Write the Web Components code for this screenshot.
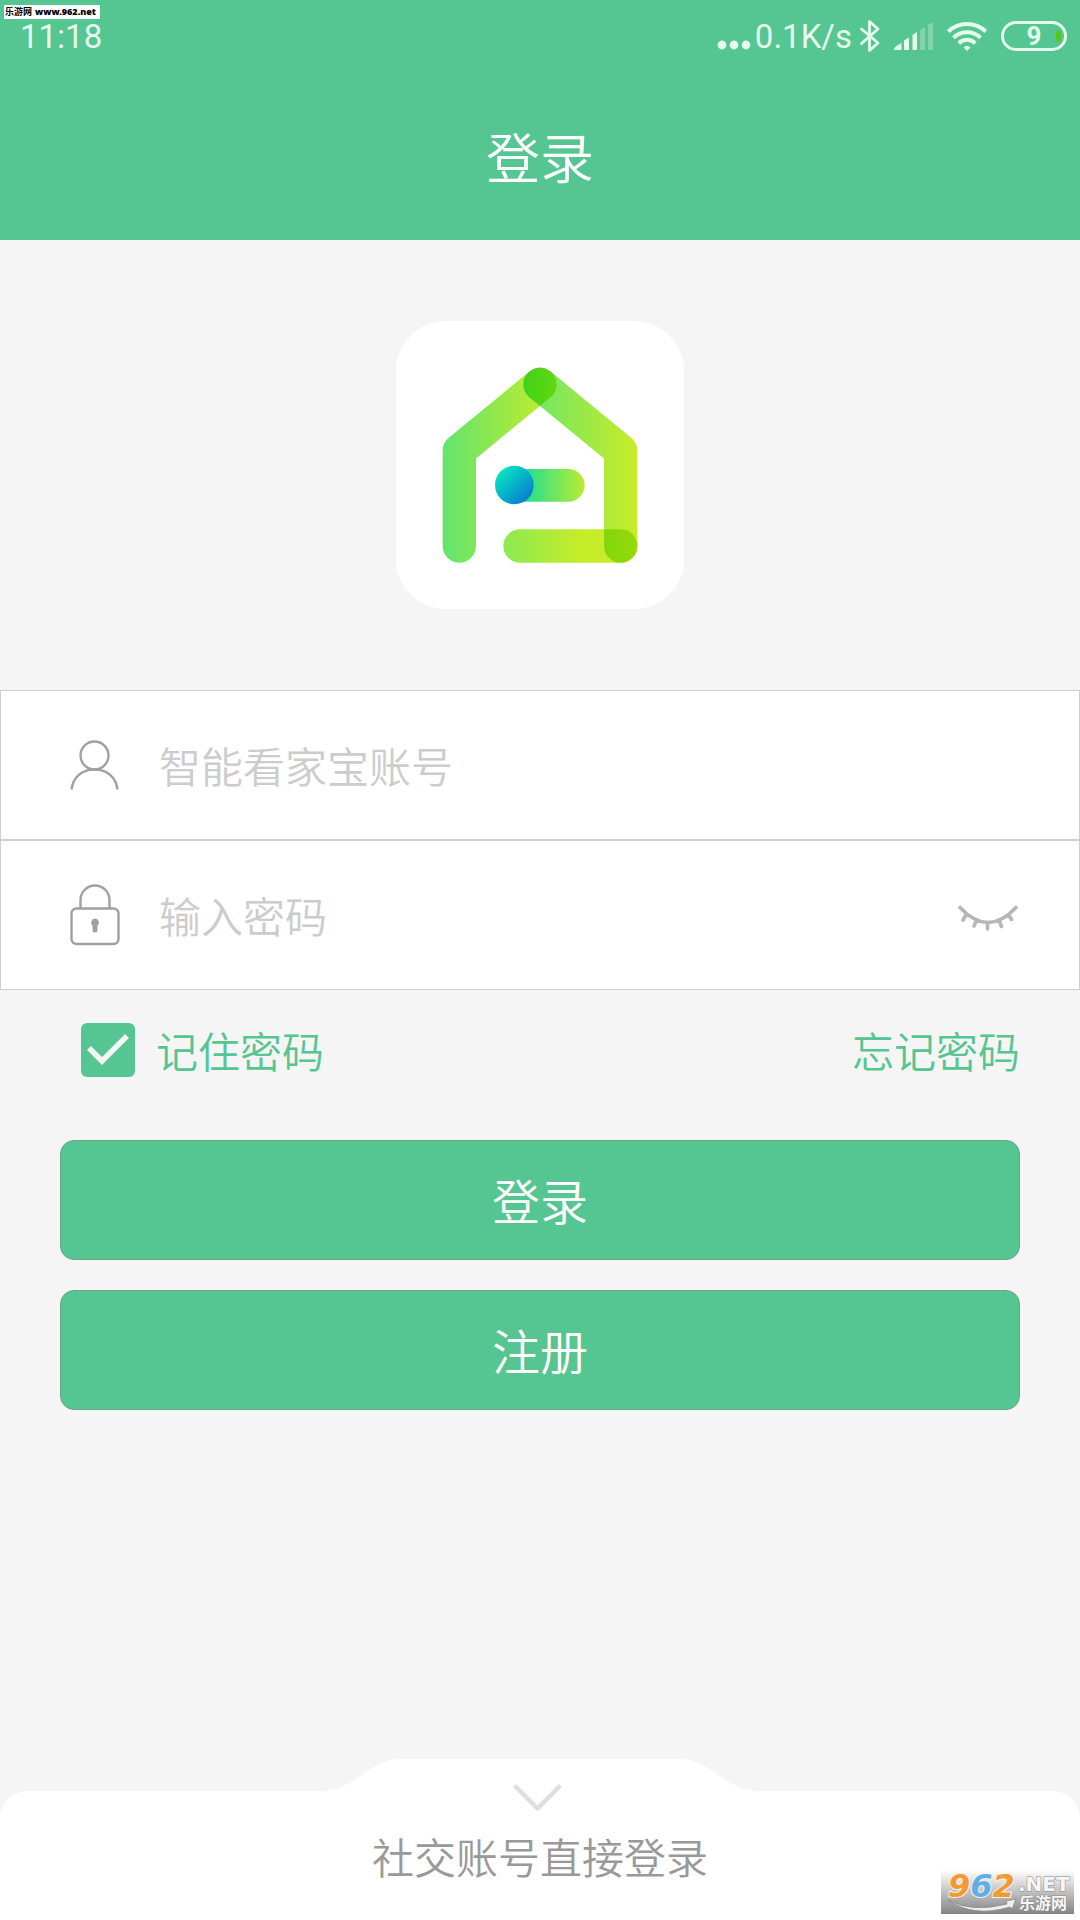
<!DOCTYPE html>
<html lang="zh-CN">
<head>
    <meta charset="UTF-8">
    <meta name="viewport" content="width=device-width, initial-scale=1.0">
    <title>登录</title>
    <style>
        body {
            --green: #55c591;
            --line: #cfcfcf;
            margin: 0;
            background: #f5f5f5;
            font-family: "Noto Sans CJK SC", sans-serif;
            font-weight: 350;
        }
    </style>
</head>
<body>
    <login-page></login-page>

    <script>
        class StatusBar extends HTMLElement {
            connectedCallback() {
                this.attachShadow({ mode: 'open' });
                this.shadowRoot.innerHTML = `
                    <style>
                        :host {
                            display: flex;
                            align-items: center;
                            justify-content: space-between;
                            height: 72px;
                            padding: 0 13px 0 20px;
                            box-sizing: border-box;
                            background: var(--green);
                            color: #e4fbee;
                            font-family: Roboto, sans-serif;
                            font-size: 33px;
                            font-weight: 400;
                        }

                        .icons {
                            display: flex;
                            align-items: center;
                            gap: 14px;
                        }

                        .net {
                            display: flex;
                            align-items: center;
                            gap: 4px;
                        }

                        .net + svg {
                            margin-left: -6px;
                        }

                        svg {
                            display: block;
                        }

                        time, .net {
                            line-height: 40px;
                            padding-top: 2px;
                        }
                    </style>
                    <time>11:18</time>
                    <div class="icons">
                        <div class="net">
                            <svg width="34" height="32" viewBox="0 0 34 32" fill="currentColor">
                                <circle cx="5" cy="24" r="4.4"/><circle cx="17" cy="24" r="4.4"/><circle cx="29" cy="24" r="4.4"/>
                            </svg>
                            <span>0.1K/s</span>
                        </div>
                        <svg width="20" height="32" viewBox="0 0 20 32" fill="none" stroke="currentColor" stroke-width="2.8" stroke-linejoin="round" stroke-linecap="round">
                            <path d="M1.500 9L18 23L9.500 30.500V1.500L18 9L1.500 23.500"/>
                        </svg>
                        <svg width="39" height="30" viewBox="0 0 39 30" fill="currentColor">
                            <path d="M0 28.500Q0 25.500 7.500 22V29H1Q0 29 0 28.500zM10 19.500L15 16.500V29H10zM18.500 14L23 11V29H18.500z"/>
                            <path opacity=".3" d="M26 9L31 6V29H26zM34 4L39 1V29H34z"/>
                        </svg>
                        <svg width="40" height="32" viewBox="0 0 40 32" fill="none" stroke="currentColor" stroke-width="4">
                            <path d="M1.200 11.500A27 27 0 0 1 38.800 11.500"/>
                            <path d="M6.500 17.700A19.500 19.500 0 0 1 33.500 17.700"/>
                            <path d="M11.700 23.200A12 12 0 0 1 28.300 23.200"/>
                            <path fill="currentColor" stroke="none" d="M20 31L16.500 27.500Q20 24 23.500 27.500z"/>
                        </svg>
                        <svg width="66" height="30" viewBox="0 0 66 30">
                            <rect x="1.500" y="1.500" width="63" height="27" rx="13.500" fill="none" stroke="currentColor" stroke-width="3"/>
                            <rect x="55" y="9.500" width="5" height="11" rx="2.500" fill="#55c41e"/>
                            <text x="33" y="24" text-anchor="middle" font-size="26" font-weight="700" fill="currentColor">9</text>
                        </svg>
                    </div>
                `;
            }
        }

        class TitleBar extends HTMLElement {
            connectedCallback() {
                this.attachShadow({ mode: 'open' });
                this.shadowRoot.innerHTML = `
                    <style>
                        :host {
                            display: flex;
                            align-items: center;
                            justify-content: center;
                            height: 168px;
                            background: var(--green);
                            color: white;
                        }

                        h1 {
                            margin: 0;
                            font-size: 54px;
                            font-weight: inherit;
                            line-height: 80px;
                        }
                    </style>
                    <h1><slot></slot></h1>
                `;
            }
        }

        class AppLogo extends HTMLElement {
            connectedCallback() {
                this.attachShadow({ mode: 'open' });
                this.shadowRoot.innerHTML = `
                    <style>
                        :host {
                            display: flex;
                            justify-content: center;
                            padding: 81px 0;
                        }

                        svg {
                            width: 288px;
                            height: 288px;
                            background: white;
                            border-radius: 50px;
                        }
                    </style>
                    <svg viewBox="0 0 864 864" fill="none" stroke-width="100" stroke-linecap="round" stroke-linejoin="round">
                        <defs>
                            <linearGradient id="left" gradientUnits="userSpaceOnUse" x1="140" y1="0" x2="440" y2="0">
                                <stop stop-color="#62e46f"/><stop offset="1" stop-color="#bdec2f"/>
                            </linearGradient>
                            <linearGradient id="right" gradientUnits="userSpaceOnUse" x1="430" y1="0" x2="724" y2="0">
                                <stop stop-color="#74e663"/><stop offset="1" stop-color="#c8ec28"/>
                            </linearGradient>
                            <linearGradient id="bottom" gradientUnits="userSpaceOnUse" x1="322" y1="0" x2="560" y2="0">
                                <stop stop-color="#8ce953"/><stop offset="1" stop-color="#c7ec28"/>
                            </linearGradient>
                            <linearGradient id="bar" gradientUnits="userSpaceOnUse" x1="400" y1="0" x2="566" y2="0">
                                <stop stop-color="#2de08a"/><stop offset="1" stop-color="#bbec31"/>
                            </linearGradient>
                            <linearGradient id="dot" x1=".15" y1=".15" x2=".85" y2=".85">
                                <stop stop-color="#05e3c0"/><stop offset="1" stop-color="#087fd0"/>
                            </linearGradient>
                            <linearGradient id="drop">
                                <stop stop-color="#43d01a"/><stop offset="1" stop-color="#5fd910"/>
                            </linearGradient>
                            <linearGradient id="corner">
                                <stop stop-color="#83d60c"/><stop offset="1" stop-color="#95da07"/>
                            </linearGradient>
                        </defs>
                        <path stroke="url(#left)" d="M190 675V389L432 190"/>
                        <path stroke="url(#right)" d="M432 190L674 389V675"/>
                        <path stroke="url(#bottom)" d="M372 675H674.01V675.01"/>
                        <path stroke="url(#bar)" stroke-width="98" d="M370 493H517V493.01"/>
                        <circle cx="355" cy="492" r="58" fill="url(#dot)"/>
                        <path fill="url(#drop)" d="M400 229A50 50 0 1 1 464 229L432 255z"/>
                        <path fill="url(#corner)" d="M624 625H674A50 50 0 1 1 624 675z"/>
                    </svg>
                `;
            }
        }

        class LoginField extends HTMLElement {
            connectedCallback() {
                const type = this.getAttribute('type') || 'text';
                const hint = this.getAttribute('hint');
                this.attachShadow({ mode: 'open' });
                this.shadowRoot.innerHTML = `
                    <style>
                        :host {
                            display: flex;
                            align-items: center;
                            height: 150px;
                            padding: 0 61px 0 69px;
                            box-sizing: border-box;
                            background: white;
                            border: 1px solid var(--line);
                        }

                        label {
                            display: flex;
                            margin-right: 39px;
                        }

                        input {
                            flex: 1;
                            min-width: 0;
                            height: 80px;
                            padding: 0 0 2px;
                            border: 0;
                            outline: 0;
                            background: none;
                            color: #666;
                            font: inherit;
                            font-size: 42px;
                            box-sizing: border-box;
                        }

                        input::placeholder {
                            color: #ccc;
                            opacity: 1;
                        }
                    </style>
                    <label for="field" aria-label="${hint}"><slot name="icon"></slot></label>
                    <input id="field" type="${type}" placeholder="${hint}">
                    <slot name="action"></slot>
                `;
            }
        }

        class LoginOptions extends HTMLElement {
            connectedCallback() {
                this.attachShadow({ mode: 'open' });
                this.shadowRoot.innerHTML = `
                    <style>
                        :host {
                            display: flex;
                            align-items: center;
                            justify-content: space-between;
                            height: 120px;
                            padding: 0 60px 0 81px;
                            color: var(--green);
                            font-size: 42px;
                            line-height: 60px;
                        }

                        label {
                            display: flex;
                            align-items: center;
                            gap: 21px;
                        }

                        .box {
                            display: grid;
                        }

                        input, svg {
                            grid-area: 1 / 1;
                            width: 54px;
                            height: 54px;
                            margin: 0;
                        }

                        input {
                            appearance: none;
                            border-radius: 6px;
                            background: white;
                        }

                        input:checked {
                            background: var(--green);
                        }

                        svg {
                            pointer-events: none;
                        }

                        a {
                            color: inherit;
                            text-decoration: none;
                        }
                    </style>
                    <label>
                        <span class="box">
                            <input type="checkbox" checked>
                            <svg viewBox="0 0 54 54" fill="none" stroke="#f5f5f5" stroke-width="5.500"><path d="M8 25L21 38L46 13"/></svg>
                        </span>
                        记住密码
                    </label>
                    <a href="#">忘记密码</a>
                `;
            }
        }

        class MainButton extends HTMLElement {
            connectedCallback() {
                this.attachShadow({ mode: 'open' });
                this.shadowRoot.innerHTML = `
                    <style>
                        :host {
                            display: block;
                        }

                        button {
                            width: 100%;
                            height: 120px;
                            padding: 0 0 2px;
                            border: 1px solid #6fa388;
                            border-radius: 14px;
                            background: var(--green);
                            color: white;
                            font: inherit;
                            font-size: 48px;
                            line-height: 72px;
                        }
                    </style>
                    <button type="button"><slot></slot></button>
                `;
            }
        }

        class SocialDrawer extends HTMLElement {
            connectedCallback() {
                this.attachShadow({ mode: 'open' });
                this.shadowRoot.innerHTML = `
                    <style>
                        :host {
                            display: grid;
                            grid-template-rows: 32px 129px;
                            justify-items: center;
                        }

                        .panel {
                            grid-area: 2 / 1;
                            justify-self: stretch;
                            display: flex;
                            align-items: center;
                            justify-content: center;
                            background: white;
                            border-radius: 28px 28px 0 0;
                            color: #999;
                            font-size: 42px;
                            line-height: 60px;
                        }

                        button {
                            grid-area: 1 / 1 / 3 / 2;
                            align-self: start;
                            padding: 0;
                            border: 0;
                            background: none;
                        }

                        svg {
                            display: block;
                        }
                    </style>
                    <div class="panel"><slot></slot></div>
                    <button type="button" aria-label="收起">
                        <svg width="436" height="56" viewBox="0 0 436 56">
                            <path fill="white" d="M0 32Q14 32 29 23L52 8Q65 0 78 0H358Q371 0 384 8L407 23Q422 32 436 32V33H0z"/>
                            <path fill="none" stroke="#dedede" stroke-width="4.500" stroke-linecap="round" stroke-linejoin="round" d="M194 28L215.500 49.500L237 28"/>
                        </svg>
                    </button>
                `;
            }
        }

        class SiteMark extends HTMLElement {
            connectedCallback() {
                this.attachShadow({ mode: 'open' });
                this.shadowRoot.innerHTML = `
                    <style>
                        :host {
                            position: absolute;
                            right: 6px;
                            bottom: 6px;
                        }

                        svg {
                            display: block;
                            overflow: visible;
                            background: linear-gradient(#fff, #848484);
                        }

                        text {
                            font-family: "DejaVu Sans", "Noto Sans CJK SC", sans-serif;
                            font-weight: 700;
                            paint-order: stroke;
                        }

                        .num {
                            font-size: 32px;
                            font-style: oblique;
                            stroke: #f2f2f2;
                            stroke-width: 2px;
                        }

                        .word {
                            fill: #f6f6f6;
                            stroke: #888;
                            stroke-width: 1px;
                        }
                    </style>
                    <svg width="133" height="44" viewBox="0 0 133 44">
                        <text class="num" x="7" y="27"><tspan fill="#f29a30">9</tspan><tspan fill="#62aee2">6</tspan><tspan fill="#f29a30">2</tspan></text>
                        <text class="word" x="77" y="21" font-size="20">.NET</text>
                        <path fill="#eee" stroke="#888" stroke-width=".8" d="M7 30Q30 43 66 34L65 31L75 29L71 39L69 37Q32 48 7 30z"/>
                        <text class="word" x="78" y="39" font-size="16">乐游网</text>
                    </svg>
                `;
            }
        }

        class SiteTag extends HTMLElement {
            connectedCallback() {
                this.attachShadow({ mode: 'open' });
                this.shadowRoot.innerHTML = `
                    <style>
                        :host {
                            position: absolute;
                            left: 4px;
                            top: 5px;
                            display: flex;
                            gap: 3px;
                            padding: 0 4px 0 1px;
                            background: white;
                            color: black;
                            font-size: 9px;
                            font-weight: 700;
                            line-height: 14px;
                        }

                        b {
                            font-family: "Noto Sans", sans-serif;
                        }
                    </style>
                    <span>乐游网</span><b>www.962.net</b>
                `;
            }
        }

        class LoginPage extends HTMLElement {
            connectedCallback() {
                this.attachShadow({ mode: 'open' });
                this.shadowRoot.innerHTML = `
                    <style>
                        :host {
                            position: relative;
                            display: flex;
                            flex-direction: column;
                            min-height: 100vh;
                        }

                        .actions {
                            display: flex;
                            flex-direction: column;
                            gap: 30px;
                            padding: 30px 60px;
                        }

                        social-drawer {
                            margin-top: auto;
                        }

                        .eye {
                            padding: 0;
                            border: 0;
                            background: none;
                        }

                        svg {
                            display: block;
                        }
                    </style>
                    <status-bar></status-bar>
                    <title-bar>登录</title-bar>
                    <app-logo></app-logo>
                    <login-field hint="智能看家宝账号">
                        <svg slot="icon" width="50" height="50" viewBox="0 0 50 50" fill="none" stroke="#a0a0a0" stroke-width="2.400">
                            <circle cx="24.500" cy="15.500" r="14"/>
                            <path d="M1.500 49.500C3 37 12 29.500 24.500 29.500S46 37 47.500 49.500"/>
                        </svg>
                    </login-field>
                    <login-field type="password" hint="输入密码">
                        <svg slot="icon" width="50" height="62" viewBox="0 0 50 62" fill="none" stroke="#a0a0a0" stroke-width="2.400">
                            <rect x="1.500" y="24.500" width="47" height="35.500" rx="5"/>
                            <path d="M10.500 24V16A14.500 14.500 0 0 1 39.500 16V24"/>
                            <path fill="#a0a0a0" stroke="none" d="M25 34.500A4 4 0 0 1 27.500 41.500V46A2.500 2.500 0 0 1 22.500 46V41.500A4 4 0 0 1 25 34.500z"/>
                        </svg>
                        <button slot="action" class="eye" type="button" aria-label="显示密码">
                            <svg width="60" height="32" viewBox="0 0 60 32" fill="none" stroke="#b6b6b6" stroke-width="3.600" stroke-linecap="round">
                                <path d="M2 8.500Q16 23.500 30 23.500T58 8.500M8.500 15L5 21M18.500 21L16 27M29.500 24V30M41 21L43.500 27.500M50.500 15.500L53.500 20.500"/>
                            </svg>
                        </button>
                    </login-field>
                    <login-options></login-options>
                    <div class="actions">
                        <main-button>登录</main-button>
                        <main-button>注册</main-button>
                    </div>
                    <social-drawer>社交账号直接登录</social-drawer>
                    <site-tag></site-tag>
                    <site-mark></site-mark>
                `;
            }
        }

        customElements.define('status-bar', StatusBar);
        customElements.define('title-bar', TitleBar);
        customElements.define('app-logo', AppLogo);
        customElements.define('login-field', LoginField);
        customElements.define('login-options', LoginOptions);
        customElements.define('main-button', MainButton);
        customElements.define('social-drawer', SocialDrawer);
        customElements.define('site-mark', SiteMark);
        customElements.define('site-tag', SiteTag);
        customElements.define('login-page', LoginPage);
    </script>
</body>
</html>
